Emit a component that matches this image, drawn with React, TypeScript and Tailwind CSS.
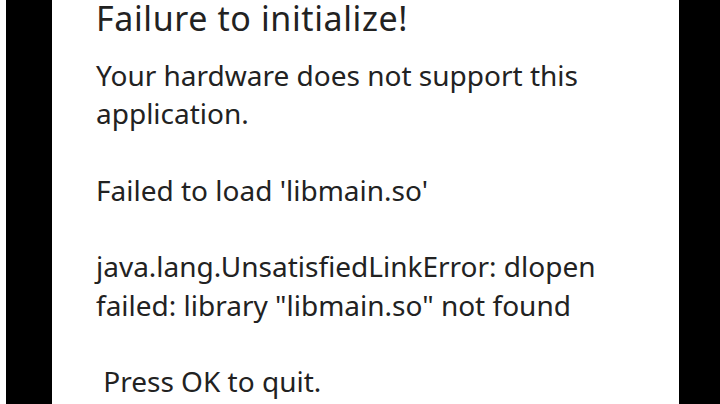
export default function App() {
  const lines = [
    'Your hardware does not support this',
    'application.',
    '',
    "Failed to load 'libmain.so'",
    '',
    'java.lang.UnsatisfiedLinkError: dlopen',
    'failed: library "libmain.so" not found',
    '',
    ' Press OK to quit.',
  ]

  return (
    <div className="flex h-[404px] w-[720px] overflow-hidden bg-white">
      <div className="w-[6px] bg-white" />
      <div className="w-[46px] bg-black" />
      <div
        className="flex-1 bg-white pl-[44px] text-[#222222]"
        style={{ fontFamily: '"Noto Sans", "Open Sans", sans-serif' }}
      >
        <h1 className="pt-[1px] text-[34px] leading-[34px] tracking-[0.6px] whitespace-nowrap">
          Failure to initialize!
        </h1>
        <div className="mt-[21px] text-[28px] leading-[38.3px]">
          {lines.map((line, i) => (
            <div key={i} className="h-[38.3px] whitespace-pre">
              {line}
            </div>
          ))}
        </div>
      </div>
      <div className="w-[41px] bg-black" />
    </div>
  )
}
